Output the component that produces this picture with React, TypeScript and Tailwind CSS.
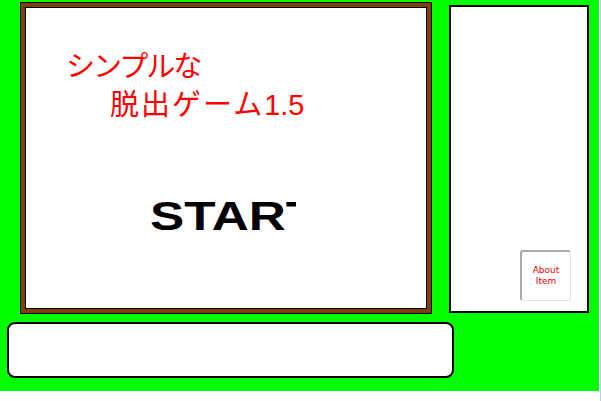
import React from "react";

export default function App() {
  return (
    <div className="flex w-[601px] h-[401px] bg-white">
      <div className="w-[599px] h-[391px] bg-[#00ff00] flex flex-col">
        {/* top row: game screen + item panel */}
        <div className="flex items-start pl-[20px] pt-[2px]">
          <div className="w-[412px] h-[312px] border border-black bg-[#804000] p-[4px]">
            <div className="w-full h-full border border-black bg-white flex flex-col">
              <div
                className="pt-[37px] pl-[40px] text-[29px] leading-[38px] text-[#ff0000]"
                style={{ fontFamily: '"Noto Sans CJK JP", sans-serif' }}
              >
                <div className="tracking-[-2px]">シンプルな</div>
                <div className="pl-[44px] whitespace-nowrap">
                  <span className="tracking-[2px]">脱出ゲーム</span>
                  <span style={{ fontFamily: '"Liberation Sans", Arial, sans-serif' }}>1.5</span>
                </div>
              </div>
              <div className="mt-[69px] ml-[124px] w-[146px] overflow-hidden whitespace-nowrap">
                <span
                  className="inline-block origin-left scale-x-[1.25] text-[41px] font-bold leading-[47px] text-black"
                  style={{ fontFamily: '"Liberation Sans", Arial, sans-serif' }}
                >
                  START
                </span>
              </div>
            </div>
          </div>

          <div className="ml-[17px] mt-[3px] w-[140px] h-[308px] border-2 border-black bg-white flex flex-col items-end justify-end pr-[16px] pb-[10px]">
            <button
              className="w-[51px] h-[51px] rounded-[3px] border-2 border-t-[#a8a8a8] border-l-[#a8a8a8] border-r-[#e4e4e4] border-b-[#e4e4e4] border-r-1 border-b-1 bg-white flex flex-col items-center justify-center text-[9px] leading-[11px] text-[#ff0000]"
              style={{ fontFamily: '"DejaVu Sans", Verdana, sans-serif' }}
            >
              <span>About</span>
              <span>Item</span>
            </button>
          </div>
        </div>

        {/* message window */}
        <div className="mt-[8px] ml-[7px] w-[447px] h-[56px] border-2 border-black rounded-[8px] bg-white"></div>
      </div>
      <div className="w-[1px] h-full bg-white"></div>
      <div className="w-[1px] h-full bg-[#b8d0ec]"></div>
    </div>
  );
}
